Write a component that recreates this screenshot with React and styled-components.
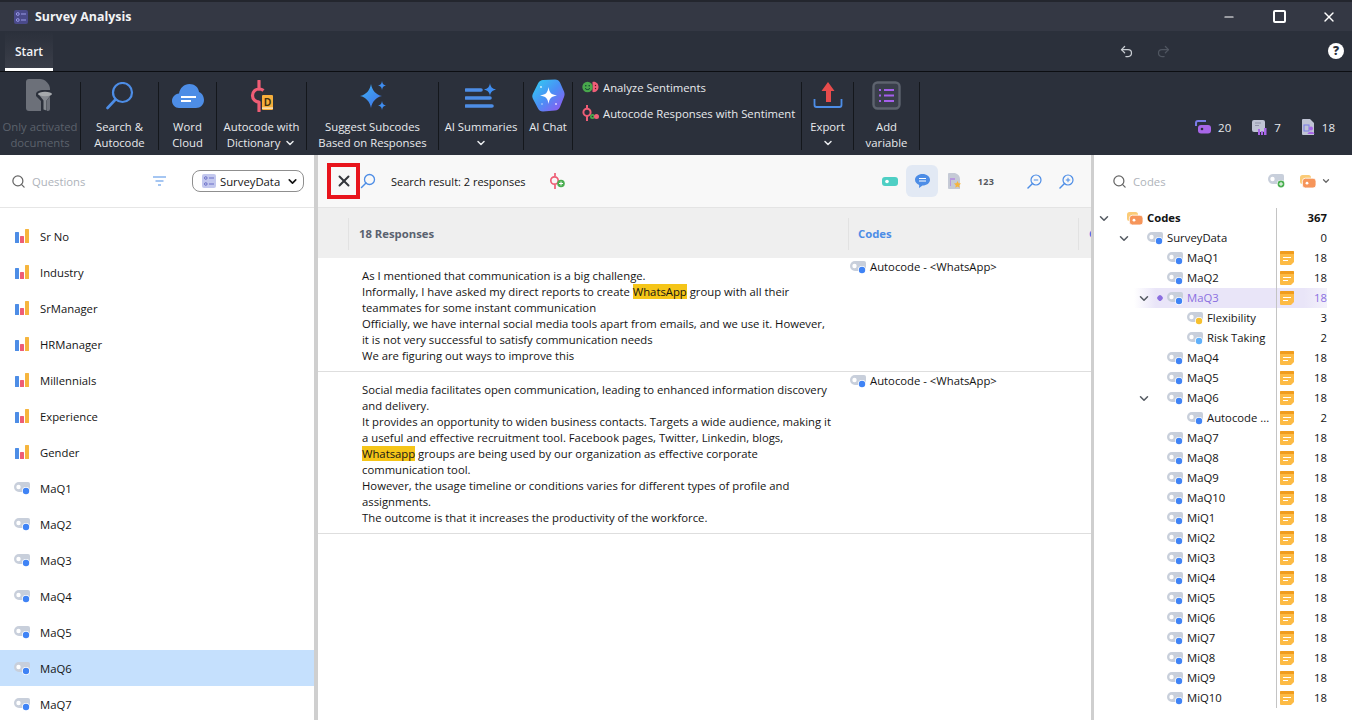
import { ChevronDown, Search, Undo2, X, Minus } from "lucide-react";
import styled, { createGlobalStyle } from "styled-components";

const GlobalStyle = createGlobalStyle`
    html, body {
        margin: 0;
        padding: 0;
        height: 100%;
        overflow: hidden;
        background: #fff;
    }
    body {
        font-family: "Open Sans", "Noto Sans", "Liberation Sans", sans-serif;
        font-size: 11.3px;
        color: #141414;
    }
`;

const Page = styled.div`
    width: 1352px;
    height: 720px;
    display: flex;
    flex-direction: column;
    overflow: hidden;
`;

const TitleBar = styled.div`
    height: 31px;
    flex: none;
    display: flex;
    align-items: center;
    padding-left: 14px;
    background: #343844;
    border-top: 2px solid #23262e;
    box-sizing: border-box;
    color: #fff;
`;

const AppName = styled.div`
    margin-left: 7px;
    font-size: 12.400px;
    font-weight: 700;
    color: #f2f3f5;
`;

const WindowButtons = styled.div`
    margin-left: auto;
    display: flex;
    align-items: center;
    margin-right: -2px;
`;

const WindowButton = styled.div`
    width: 50px;
    display: flex;
    justify-content: center;
    align-items: center;
`;

const MaxBox = styled.div`
    width: 9px;
    height: 9px;
    border: 2px solid #fff;
    border-radius: 2px;
`;

const TabBar = styled.div`
    height: 41px;
    flex: none;
    display: flex;
    align-items: stretch;
    padding-left: 5px;
    background: #2b303b;
    border-bottom: 1px solid #0c0e12;
    box-sizing: border-box;
`;

const Tab = styled.div`
    width: 48px;
    display: flex;
    align-items: center;
    justify-content: center;
    font-size: 12px;
    font-weight: 600;
    color: #f2f3f5;
    background: linear-gradient(#2b303b, #3a3e49);
    border-bottom: 3px solid #fff;
    border-radius: 3px 3px 0 0;
    padding-top: 3px;
    box-sizing: border-box;
`;

const TabTools = styled.div`
    margin-left: auto;
    display: flex;
    align-items: center;
    padding-right: 8px;
`;

const HistoryIcon = styled.div`
    width: 38px;
    display: flex;
    justify-content: center;
    color: ${(p) => (p.$off ? "#4f5560" : "#c8ccd2")};
    transform: ${(p) => (p.$off ? "scaleX(-1)" : "none")};
`;

const HelpBadge = styled.div`
    width: 16px;
    height: 16px;
    margin-left: 145px;
    border-radius: 50%;
    background: #fff;
    color: #2b303b;
    font-size: 12px;
    font-weight: 800;
    line-height: 16px;
    text-align: center;
`;

const Ribbon = styled.div`
    height: 83px;
    flex: none;
    display: flex;
    background: #2b303b;
`;

const RibbonButton = styled.div`
    width: ${(p) => p.$w}px;
    flex: none;
    display: flex;
    flex-direction: column;
    align-items: center;
    color: ${(p) => (p.$off ? "#5c626c" : "#e8eaed")};
    line-height: 16px;
    text-align: center;
    white-space: nowrap;
`;

const RibbonIcon = styled.div`
    height: 47px;
    flex: none;
    display: flex;
    align-items: center;
    justify-content: center;
`;

const RibbonLabel = styled.div`
    display: flex;
    align-items: center;
    justify-content: center;
    gap: 4px;
    height: 16px;
`;

const Separator = styled.div`
    width: 1px;
    flex: none;
    margin: 10px 0 5px;
    background: #14171c;
`;

const SentimentColumn = styled.div`
    width: 228px;
    flex: none;
    display: flex;
    flex-direction: column;
    gap: 10px;
    padding: 7px 0 0 9px;
    box-sizing: border-box;
    color: #e8eaed;
`;

const SentimentRow = styled.div`
    display: flex;
    align-items: center;
    gap: 4px;
    height: 16px;
    white-space: nowrap;
`;

const Stats = styled.div`
    margin-left: auto;
    display: flex;
    align-items: flex-start;
    gap: 21px;
    padding: 47px 17px 0 0;
    color: #e8eaed;
    font-size: 11.500px;
`;

const Stat = styled.div`
    display: flex;
    align-items: center;
    gap: 7px;
    height: 16px;
`;

const Body = styled.div`
    flex: 1;
    display: flex;
    min-height: 0;
`;

const LeftPanel = styled.div`
    width: 318px;
    flex: none;
    box-sizing: border-box;
    border-right: 4px solid #cfcfcf;
    display: flex;
    flex-direction: column;
`;

const SearchHeader = styled.div`
    height: 53px;
    flex: none;
    display: flex;
    align-items: center;
    box-sizing: border-box;
    padding-left: ${(p) => p.$pad}px;
    border-bottom: 1px solid ${(p) => (p.$plain ? "transparent" : "#e6e6e6")};
`;

const SearchHint = styled.span`
    margin-left: ${(p) => p.$gap}px;
    color: #aeb3ba;
`;

const SelectBox = styled.div`
    width: 112px;
    height: 22px;
    margin-left: 26px;
    margin-right: 10px;
    box-sizing: border-box;
    display: flex;
    align-items: center;
    gap: 4px;
    padding: 0 4px 0 9px;
    border: 1px solid #8f8f8f;
    border-radius: 8px;
    color: #141414;
    font-size: 11.300px;
`;

const SelectChevron = styled(ChevronDown)`
    margin-left: auto;
`;

const FilterIcon = styled.div`
    margin-left: auto;
    display: flex;
`;

const QuestionList = styled.div`
    padding-top: 10px;
`;

const QuestionRow = styled.div`
    height: 36px;
    display: flex;
    align-items: center;
    gap: 10px;
    padding-left: 14px;
    background: ${(p) => (p.$selected ? "#c5e0fd" : "transparent")};
`;

const QuestionIcon = styled.div`
    width: 16px;
    display: flex;
    justify-content: center;
`;

const MiddlePanel = styled.div`
    width: 773px;
    flex: none;
    display: flex;
    flex-direction: column;
    overflow: hidden;
`;

const MiddleToolbar = styled.div`
    height: 53px;
    flex: none;
    display: flex;
    align-items: center;
    box-sizing: border-box;
    padding-left: 9px;
    background: #f8f8f8;
    border-bottom: 1px solid #e4e4e4;
`;

const CloseMark = styled.div`
    width: 33px;
    height: 36px;
    box-sizing: border-box;
    border: 4px solid #e8141c;
    display: flex;
    align-items: center;
    justify-content: center;
    color: #33363b;
`;

const ResultText = styled.span`
    margin-left: 15px;
    margin-right: 23px;
    font-size: 11px;
`;

const ViewTools = styled.div`
    margin-left: auto;
    margin-right: 9px;
    display: flex;
    align-items: center;
`;

const ViewTool = styled.div`
    width: 32px;
    height: 32px;
    margin-left: ${(p) => p.$gap || 0}px;
    display: flex;
    align-items: center;
    justify-content: center;
    border-radius: 6px;
    background: ${(p) => (p.$active ? "#e2e9f4" : "transparent")};
    color: #55595f;
    font-size: 9px;
    font-weight: 700;
    letter-spacing: 0.4px;
`;

const HeaderRow = styled.div`
    height: 50px;
    flex: none;
    display: grid;
    grid-template-columns: 530px 230px 1fr;
    background: #efefef;
`;

const HeaderCell = styled.div`
    display: flex;
    align-items: center;
    font-weight: 700;
    color: ${(p) => p.$color};
    overflow: hidden;
    padding-left: ${(p) => p.$pad}px;
    position: relative;
    &::before {
        content: "";
        position: absolute;
        left: ${(p) => p.$line}px;
        top: 10px;
        bottom: 8px;
        width: 1px;
        background: #e2e2e2;
    }
`;

const ResponseRow = styled.div`
    display: grid;
    grid-template-columns: 530px 1fr;
    border-bottom: 1px solid #dedede;
    background: #fff;
`;

const ResponseText = styled.div`
    padding: 10px 0 7px 44px;
    line-height: 16px;
    white-space: nowrap;
`;

const TextLine = styled.div`
    height: 16px;
`;

const Mark = styled.span`
    background: #f5c518;
`;

const CodeCell = styled.div`
    display: flex;
    align-items: flex-start;
    gap: 4px;
    padding: 1px 0 0 2px;
    line-height: 16px;
`;

const CodeCellIcon = styled.div`
    padding-top: 2px;
    display: flex;
`;

const RightPanel = styled.div`
    flex: 1;
    min-width: 0;
    border-left: 3px solid #cfcfcf;
    display: flex;
    flex-direction: column;
`;

const CodeTools = styled.div`
    margin-left: auto;
    margin-right: 21px;
    display: flex;
    align-items: center;
    gap: 15px;
`;

const FolderTool = styled.div`
    display: flex;
    align-items: center;
    gap: 5px;
    color: #666;
`;

const TreeRow = styled.div`
    height: 20px;
    display: grid;
    grid-template-columns: 182px 51px;
    align-items: stretch;
    line-height: 20px;
    font-weight: ${(p) => (p.$bold ? 700 : 400)};
    color: ${(p) => (p.$selected ? "#8b6fe0" : "#141414")};
    background: ${(p) => (p.$selected ? "linear-gradient(90deg, #fff 40px, #e9e5f8 62px, #e9e5f8 90%, #f3f1fb 100%)" : "none")};
    margin-right: 25px;
`;

const TreeName = styled.div`
    display: flex;
    align-items: center;
    padding-left: ${(p) => 3 + p.$level * 20}px;
    white-space: nowrap;
    overflow: hidden;
`;

const Twisty = styled.div`
    width: 14px;
    flex: none;
    display: flex;
    justify-content: center;
    color: #555b63;
`;

const TreeDot = styled.div`
    width: 6px;
    height: 6px;
    flex: none;
    margin-left: 6px;
    margin-right: -12px;
    border-radius: 2px;
    transform: rotate(45deg) scale(0.85);
    background: ${(p) => (p.$show ? "#8b6fe0" : "transparent")};
`;

const TreeIconBox = styled.div`
    width: 16px;
    flex: none;
    margin-left: 16px;
    margin-right: 4px;
    display: flex;
    align-items: center;
`;

const TreeCount = styled.div`
    display: flex;
    align-items: center;
    justify-content: space-between;
    border-left: 1px solid #c4c4c4;
    padding-left: 3px;
`;

const MemoSlot = styled.div`
    width: 15px;
    display: flex;
`;

/* icons */
const Logo = () => (
    <svg width="14" height="14" viewBox="0 0 14 14">
        <rect width="14" height="14" rx="2" fill="#4a4a8a" />
        <circle cx="3.800" cy="4" r="1.400" fill="none" stroke="#9a9ae8" />
        <circle cx="3.800" cy="10" r="1.400" fill="none" stroke="#9a9ae8" />
        <path d="M7 4h5M7 10h5" stroke="#9a9ae8" />
    </svg>
);

const DocFilter = () => (
    <svg width="28" height="33" viewBox="0 0 28 33">
        <path d="M3 0h11c5 0 10 5 10 10v20a2 2 0 0 1-2 2H3a3 3 0 0 1-3-3V3a3 3 0 0 1 3-3z" fill="#6c7079" />
        <path d="M10 15c0-2 3-4 8-4h9v3l-6 7v11h-6V22l-5-5z" fill="#2b303b" />
        <path d="M12.500 15h13l-5 6.500v10l-3-1v-9z" fill="#858990" />
        <ellipse cx="19" cy="15" rx="7" ry="2.200" fill="#a6a9ad" />
    </svg>
);

const BigSearch = () => (
    <svg width="28" height="28" viewBox="0 0 28 28" fill="none">
        <circle cx="16.500" cy="10.500" r="9.500" stroke="#4d8de6" strokeWidth="2.200" />
        <path d="M9.500 17.500 1.500 26" stroke="#4d8de6" strokeWidth="2.600" strokeLinecap="round" />
    </svg>
);

const Cloud = () => (
    <svg width="32" height="24" viewBox="0 0 32 24">
        <path d="M7 24C3 24 0 20.500 0 17c0-4 3-7 7-7.500C8 4 12 0 17.500 0c5 0 9 3 9.500 8 3 1 5 4.500 5 8 0 4.500-3.500 8-8 8z" fill="#4d8de6" />
        <path d="M9 13h15M9 17h10" stroke="#fff" strokeWidth="1.800" />
    </svg>
);

const AutocodeDict = () => (
    <svg width="23" height="32" viewBox="0 0 23 32">
        <g fill="none" stroke="#ee5d75" strokeWidth="3.200">
            <path d="M9 1v8" strokeLinecap="round" />
            <path d="M13.500 10.500A6.500 6.500 0 0 0 9 9a6.500 6.500 0 0 0 0 13" />
            <path d="M9 22v9" strokeLinecap="round" />
        </g>
        <rect x="12" y="15" width="11" height="15" rx="1" fill="#f6ae3b" />
        <rect x="12" y="27.500" width="11" height="1.200" fill="#fff" opacity="0.8" />
        <text x="17.500" y="25.500" fontSize="10" fontWeight="700" textAnchor="middle" fill="#40300f" fontFamily="Liberation Sans, sans-serif">D</text>
    </svg>
);

const Sparkles = () => (
    <svg width="30" height="30" viewBox="0 0 30 30">
        <defs>
            <linearGradient id="spark" x1="0" y1="0" x2="1" y2="1">
                <stop offset="0" stopColor="#3fb4f5" />
                <stop offset="1" stopColor="#3f6de8" />
            </linearGradient>
        </defs>
        <path d="M13 3c1 6 5 11 11 12-6 1-10 6-11 12-1-6-5-11-11-12 6-1 10-6 11-12z" fill="url(#spark)" />
        <path d="M24 0c.5 3 1.500 4 4 4.500-2.500.5-3.500 1.500-4 4.500-.5-3-1.500-4-4-4.500 2.500-.5 3.500-1.500 4-4.500z" fill="#3f8df0" />
        <path d="M24 20c.5 3 1.500 4 4 4.500-2.500.5-3.500 1.500-4 4.500-.5-3-1.500-4-4-4.500 2.500-.5 3.500-1.500 4-4.500z" fill="#3f8df0" />
    </svg>
);

const Summaries = () => (
    <svg width="32" height="26" viewBox="0 0 32 26">
        <path d="M1 7h15M1 15h24M1 23h26" stroke="#4d8de6" strokeWidth="3.600" strokeLinecap="round" />
        <path d="M25 0c.6 4 2 5.500 6 6.500-4 1-5.400 2.500-6 6.500-.6-4-2-5.500-6-6.500 4-1 5.400-2.500 6-6.500z" fill="#3f8df0" />
    </svg>
);

const ChatHex = () => (
    <svg width="33" height="33" viewBox="0 0 33 33">
        <defs>
            <linearGradient id="hex" x1="0" y1="0" x2="1" y2="1">
                <stop offset="0" stopColor="#2fd2f2" />
                <stop offset="0.5" stopColor="#4a90f5" />
                <stop offset="1" stopColor="#9a50f0" />
            </linearGradient>
        </defs>
        <path d="M11 1 23 .5c2.500 0 4 1 5 3l4 9c.8 2 .8 3.500 0 5.500l-4 10c-1 2-2.500 3.500-5 3.500l-12 1c-2.500 0-4-1-5-3L1 20c-1-2-1-3.500 0-5.500L6 4.500c1-2 3-3.500 5-3.500z" fill="url(#hex)" />
        <path d="M16.500 8c1 6 2.500 7.500 8.500 8.500-6 1-7.500 2.500-8.500 8.500-1-6-2.500-7.500-8.500-8.500 6-1 7.500-2.500 8.500-8.500z" fill="#fff" />
        <circle cx="9" cy="8" r=".9" fill="#d8f4ff" />
        <circle cx="24" cy="25" r=".9" fill="#e8dcff" />
        <circle cx="10" cy="25" r=".7" fill="#e8f0ff" />
    </svg>
);

const Sentiments = () => (
    <svg width="17" height="12" viewBox="0 0 17 12">
        <path d="M10.500 1c3.500-.8 6 2 6 5s-2.500 5.800-6 5z" fill="#ef5f78" />
        <circle cx="5.500" cy="6" r="5.200" fill="#49a84c" />
        <circle cx="3.800" cy="4.800" r=".8" fill="#143" />
        <circle cx="7.200" cy="4.800" r=".8" fill="#143" />
        <path d="M3 7.200c1 1.800 4 1.800 5 0" stroke="#143" fill="none" />
        <circle cx="13.500" cy="4.500" r=".7" fill="#612" />
        <circle cx="13.500" cy="7.500" r=".7" fill="#612" />
    </svg>
);

const CodeSentiment = () => (
    <svg width="17" height="16" viewBox="0 0 17 16">
        <g fill="none" stroke="#ee5d75" strokeWidth="2">
            <path d="M5 0v3.500M5 11v5" />
            <circle cx="5" cy="7.300" r="3.600" />
        </g>
        <circle cx="10.500" cy="11.500" r="2.500" fill="#49a84c" />
        <circle cx="14.500" cy="11.500" r="2.500" fill="#ef5f78" />
        <circle cx="10.500" cy="11.500" r=".8" fill="#2b303b" />
    </svg>
);

const ExportIcon = () => (
    <svg width="30" height="30" viewBox="0 0 30 30">
        <path d="M15 1 8.500 10H13v11h5V10h3.500z" fill="#e84c4c" />
        <path d="M1.500 18v6a2 2 0 0 0 2 2h23a2 2 0 0 0 2-2v-6" fill="none" stroke="#4d8de6" strokeWidth="1.800" />
    </svg>
);

const AddVariable = () => (
    <svg width="29" height="29" viewBox="0 0 29 29">
        <rect x="1.500" y="1.500" width="26" height="26" rx="4" fill="#3a3f4b" stroke="#5d636e" strokeWidth="2.400" />
        <path d="M7 9h2M7 14.500h2M7 20h2M12 9h10M12 14.500h10M12 20h10" stroke="#a45fec" strokeWidth="2" />
    </svg>
);

const StatCodes = () => (
    <svg width="16" height="14" viewBox="0 0 16 14">
        <path d="M1 6V3a2 2 0 0 1 2-2h8" stroke="#7a7ce8" strokeWidth="2" fill="none" />
        <rect x="3" y="5" width="13" height="8.500" rx="3" fill="#a866e8" />
        <circle cx="7" cy="9" r="1.300" fill="#2b303b" />
    </svg>
);

const StatChart = () => (
    <svg width="15" height="15" viewBox="0 0 15 15">
        <rect x="0" y="0" width="13" height="12" rx="2" fill="#bfc3d4" />
        <path d="M3 3h6M3 5.500h4" stroke="#8f93a8" />
        <path d="M6 9h2v6H6zM9 11h2v4H9zM12 8h2.500v7H12z" fill="#a866e8" />
    </svg>
);

const StatDoc = () => (
    <svg width="13" height="16" viewBox="0 0 13 16">
        <path d="M1 0h7l4 4v12H1a1 1 0 0 1-1-1V1a1 1 0 0 1 1-1z" fill="#bfc3d4" />
        <rect x="2" y="6" width="5" height="6" fill="none" stroke="#7a7ce8" />
        <circle cx="9" cy="9.500" r="2" fill="#a866e8" />
        <path d="M5.500 15c.5-3 6.500-3 7 0z" fill="#a866e8" />
    </svg>
);

const SmallSearch = () => (
    <svg width="16" height="16" viewBox="0 0 16 16" fill="none">
        <circle cx="9.500" cy="6.500" r="5" stroke="#4d8de6" strokeWidth="1.300" />
        <path d="M6 10 1.500 14.500" stroke="#4d8de6" strokeWidth="1.500" strokeLinecap="round" />
    </svg>
);

const FilterLines = () => (
    <svg width="13" height="10" viewBox="0 0 13 10">
        <path d="M0 1h13M2.500 5h8M5 9h3" stroke="#4d8de6" strokeWidth="1.200" />
    </svg>
);

const Bars = () => (
    <svg width="14" height="14" viewBox="0 0 14 14">
        <rect x="0" y="3" width="4" height="11" rx=".5" fill="#4d8de6" />
        <rect x="5" y="7" width="4" height="7" rx=".5" fill="#ee5d75" />
        <rect x="10" y="0" width="4" height="14" rx=".5" fill="#f6b53d" />
    </svg>
);

const CodeIcon = ({ color = "#3f83f5" }) => (
    <svg width="16" height="13" viewBox="0 0 16 13">
        <path d="M5 0h9a2 2 0 0 1 2 2v6a2 2 0 0 1-2 2H5A5 5 0 0 1 5 0z" fill="#c8cfdb" />
        <circle cx="4.500" cy="5" r="2.200" fill="#fff" />
        <circle cx="12" cy="9" r="4" fill="#fff" />
        <circle cx="12" cy="9" r="3.200" fill={color} />
    </svg>
);

const FolderCode = () => (
    <svg width="16" height="13" viewBox="0 0 16 13">
        <rect x="0" y="0" width="11" height="9" rx="2.500" fill="#fbcb77" />
        <rect x="2.400" y="3.200" width="13.600" height="9.800" rx="3" fill="#f6955a" stroke="#fff" strokeWidth=".8" />
        <circle cx="7" cy="8.200" r="1.400" fill="#fff" />
    </svg>
);

const AddCode = () => (
    <svg width="17" height="14" viewBox="0 0 17 14">
        <path d="M5 0h9a2 2 0 0 1 2 2v6a2 2 0 0 1-2 2H5A5 5 0 0 1 5 0z" fill="#c8cfdb" />
        <circle cx="4.500" cy="5" r="2.200" fill="#fff" />
        <circle cx="13" cy="10" r="4" fill="#fff" />
        <circle cx="13" cy="10" r="3.400" fill="#4aae50" />
        <path d="M11 10h4M13 8v4" stroke="#fff" />
    </svg>
);

const AddCodeColor = () => (
    <svg width="16" height="16" viewBox="0 0 16 16">
        <g fill="none" stroke="#ee5d75" strokeWidth="1.700">
            <path d="M6 0v3M6 12v4" />
            <circle cx="5.500" cy="7.500" r="3.700" />
        </g>
        <circle cx="12" cy="10.500" r="3.800" fill="#4aae50" />
        <path d="M10 10.500h4M12 8.500v4" stroke="#fff" />
    </svg>
);

const Memo = () => (
    <svg width="14" height="14" viewBox="0 0 14 14">
        <path d="M1 0h12a1 1 0 0 1 1 1v10l-3 3H1a1 1 0 0 1-1-1V1a1 1 0 0 1 1-1z" fill="#fdbb45" />
        <path d="M1 0h12a1 1 0 0 1 1 1v2H0V1a1 1 0 0 1 1-1z" fill="#f09c1e" />
        <path d="M3 6.500h8M3 9.500h5" stroke="#fff" />
    </svg>
);

const Toggle = () => (
    <svg width="16" height="9" viewBox="0 0 16 9">
        <rect width="16" height="9" rx="3" fill="#4ecfc4" />
        <circle cx="5" cy="4.500" r="1.800" fill="#fff" />
    </svg>
);

const Comment = () => (
    <svg width="15" height="14" viewBox="0 0 15 14">
        <path d="M7.500 0C11.700 0 15 2.500 15 5.800s-3.300 5.800-7.500 5.800L4 14l.2-3C1.700 10 0 8.100 0 5.800 0 2.500 3.300 0 7.500 0z" fill="#4d8de6" />
        <path d="M4 4.500h7M4 7h7" stroke="#fff" />
    </svg>
);

const DocStar = () => (
    <svg width="13" height="16" viewBox="0 0 13 16">
        <path d="M1 0h6c3 1 5 3 5 6v10H1a1 1 0 0 1-1-1V1a1 1 0 0 1 1-1z" fill="#c5cad6" />
        <path d="M2 6h5M2 8h1M2 10h1M2 12h1" stroke="#a866e8" />
        <path d="M9.500 8l1.100 2.300 2.400.3-1.800 1.700.5 2.500-2.200-1.200-2.200 1.200.5-2.500L6 10.600l2.400-.3z" fill="#f6b53d" />
    </svg>
);

const Zoomer = ({ plus }) => (
    <svg width="15" height="15" viewBox="0 0 15 15" fill="none" stroke="#4d8de6">
        <circle cx="9" cy="6" r="5" strokeWidth="1.200" />
        <path d="M5.500 9.500 1 14" strokeWidth="1.500" strokeLinecap="round" />
        <path d="M6.800 6h4.400" />
        {plus && <path d="M9 3.800v4.400" />}
    </svg>
);

const SelectIcon = () => (
    <svg width="14" height="14" viewBox="0 0 14 14">
        <rect width="14" height="14" rx="2" fill="#c3c8ee" />
        <circle cx="3.800" cy="4" r="1.300" fill="none" stroke="#6b6fc8" />
        <circle cx="3.800" cy="10" r="1.300" fill="none" stroke="#6b6fc8" />
        <path d="M7 4h5M7 10h5" stroke="#6b6fc8" />
    </svg>
);

const questions = [
    { name: "Sr No", bars: true },
    { name: "Industry", bars: true },
    { name: "SrManager", bars: true },
    { name: "HRManager", bars: true },
    { name: "Millennials", bars: true },
    { name: "Experience", bars: true },
    { name: "Gender", bars: true },
    { name: "MaQ1" },
    { name: "MaQ2" },
    { name: "MaQ3" },
    { name: "MaQ4" },
    { name: "MaQ5" },
    { name: "MaQ6", selected: true },
    { name: "MaQ7" },
];

const simpleCodes = (prefix, from, to) => {
    let rows = [];
    for (let i = from; i <= to; i++) {
        rows.push({ name: prefix + i, level: 2, count: 18, memo: true });
    }
    return rows;
};

const treeRows = [
    { name: "Codes", level: 0, count: 367, open: true, bold: true, root: true },
    { name: "SurveyData", level: 1, count: 0, open: true },
    ...simpleCodes("MaQ", 1, 2),
    { name: "MaQ3", level: 2, count: 18, memo: true, open: true, selected: true },
    { name: "Flexibility", level: 3, count: 3, color: "#f6c02e" },
    { name: "Risk Taking", level: 3, count: 2, color: "#5fb0fa" },
    ...simpleCodes("MaQ", 4, 5),
    { name: "MaQ6", level: 2, count: 18, memo: true, open: true },
    { name: "Autocode ...", level: 3, count: 2, memo: true },
    ...simpleCodes("MaQ", 7, 10),
    ...simpleCodes("MiQ", 1, 10),
];

const responses = [
    {
        lines: [
            "As I mentioned that communication is a big challenge.",
            <>Informally, I have asked my direct reports to create <Mark>WhatsApp</Mark> group with all their</>,
            "teammates for some instant communication",
            "Officially, we have internal social media tools apart from emails, and we use it. However,",
            "it is not very successful to satisfy communication needs",
            "We are figuring out ways to improve this",
        ],
    },
    {
        lines: [
            "Social media facilitates open communication, leading to enhanced information discovery",
            "and delivery.",
            "It provides an opportunity to widen business contacts. Targets a wide audience, making it",
            "a useful and effective recruitment tool. Facebook pages, Twitter, Linkedin, blogs,",
            <><Mark>Whatsapp</Mark> groups are being used by our organization as effective corporate</>,
            "communication tool.",
            "However, the usage timeline or conditions varies for different types of profile and",
            "assignments.",
            "The outcome is that it increases the productivity of the workforce.",
        ],
    },
];

export default function App() {
    return (
        <Page>
            <GlobalStyle />
            <TitleBar>
                <Logo />
                <AppName>Survey Analysis</AppName>
                <WindowButtons>
                    <WindowButton><Minus size={14} strokeWidth={2} /></WindowButton>
                    <WindowButton><MaxBox /></WindowButton>
                    <WindowButton><X size={16} strokeWidth={2} /></WindowButton>
                </WindowButtons>
            </TitleBar>
            <TabBar>
                <Tab>Start</Tab>
                <TabTools>
                    <HistoryIcon><Undo2 size={15} /></HistoryIcon>
                    <HistoryIcon $off><Undo2 size={15} /></HistoryIcon>
                    <HelpBadge>?</HelpBadge>
                </TabTools>
            </TabBar>
            <Ribbon>
                <RibbonButton $w={80} $off>
                    <RibbonIcon><DocFilter /></RibbonIcon>
                    <RibbonLabel>Only activated</RibbonLabel>
                    <RibbonLabel>documents</RibbonLabel>
                </RibbonButton>
                <Separator />
                <RibbonButton $w={77}>
                    <RibbonIcon><BigSearch /></RibbonIcon>
                    <RibbonLabel>Search &amp;</RibbonLabel>
                    <RibbonLabel>Autocode</RibbonLabel>
                </RibbonButton>
                <Separator />
                <RibbonButton $w={57}>
                    <RibbonIcon><Cloud /></RibbonIcon>
                    <RibbonLabel>Word</RibbonLabel>
                    <RibbonLabel>Cloud</RibbonLabel>
                </RibbonButton>
                <Separator />
                <RibbonButton $w={89}>
                    <RibbonIcon><AutocodeDict /></RibbonIcon>
                    <RibbonLabel>Autocode with</RibbonLabel>
                    <RibbonLabel>Dictionary <ChevronDown size={12} strokeWidth={3} /></RibbonLabel>
                </RibbonButton>
                <Separator />
                <RibbonButton $w={131}>
                    <RibbonIcon><Sparkles /></RibbonIcon>
                    <RibbonLabel>Suggest Subcodes</RibbonLabel>
                    <RibbonLabel>Based on Responses</RibbonLabel>
                </RibbonButton>
                <Separator />
                <RibbonButton $w={84}>
                    <RibbonIcon><Summaries /></RibbonIcon>
                    <RibbonLabel>AI Summaries</RibbonLabel>
                    <RibbonLabel><ChevronDown size={12} strokeWidth={3} /></RibbonLabel>
                </RibbonButton>
                <Separator />
                <RibbonButton $w={48}>
                    <RibbonIcon><ChatHex /></RibbonIcon>
                    <RibbonLabel>AI Chat</RibbonLabel>
                </RibbonButton>
                <Separator />
                <SentimentColumn>
                    <SentimentRow><Sentiments /> Analyze Sentiments</SentimentRow>
                    <SentimentRow><CodeSentiment /> Autocode Responses with Sentiment</SentimentRow>
                </SentimentColumn>
                <Separator />
                <RibbonButton $w={51}>
                    <RibbonIcon><ExportIcon /></RibbonIcon>
                    <RibbonLabel>Export</RibbonLabel>
                    <RibbonLabel><ChevronDown size={12} strokeWidth={3} /></RibbonLabel>
                </RibbonButton>
                <Separator />
                <RibbonButton $w={65}>
                    <RibbonIcon><AddVariable /></RibbonIcon>
                    <RibbonLabel>Add</RibbonLabel>
                    <RibbonLabel>variable</RibbonLabel>
                </RibbonButton>
                <Separator />
                <Stats>
                    <Stat><StatCodes /> 20</Stat>
                    <Stat><StatChart /> 7</Stat>
                    <Stat><StatDoc /> 18</Stat>
                </Stats>
            </Ribbon>
            <Body>
                <LeftPanel>
                    <SearchHeader $pad={11}>
                        <Search size={15} color="#666" />
                        <SearchHint $gap={6}>Questions</SearchHint>
                        <FilterIcon><FilterLines /></FilterIcon>
                        <SelectBox>
                            <SelectIcon />
                            SurveyData
                            <SelectChevron size={13} strokeWidth={3} />
                        </SelectBox>
                    </SearchHeader>
                    <QuestionList>
                        {questions.map((q) => (
                            <QuestionRow key={q.name} $selected={q.selected}>
                                <QuestionIcon>{q.bars ? <Bars /> : <CodeIcon />}</QuestionIcon>
                                <span>{q.name}</span>
                            </QuestionRow>
                        ))}
                    </QuestionList>
                </LeftPanel>
                <MiddlePanel>
                    <MiddleToolbar>
                        <CloseMark><X size={18} strokeWidth={2.6} /></CloseMark>
                        <SmallSearch />
                        <ResultText>Search result: 2 responses</ResultText>
                        <AddCodeColor />
                        <ViewTools>
                            <ViewTool><Toggle /></ViewTool>
                            <ViewTool $active><Comment /></ViewTool>
                            <ViewTool><DocStar /></ViewTool>
                            <ViewTool>123</ViewTool>
                            <ViewTool $gap={16}><Zoomer /></ViewTool>
                            <ViewTool><Zoomer plus /></ViewTool>
                        </ViewTools>
                    </MiddleToolbar>
                    <HeaderRow>
                        <HeaderCell $color="#5a6270" $pad={41} $line={30}>18 Responses</HeaderCell>
                        <HeaderCell $color="#4d8de6" $pad={10} $line={0}>Codes</HeaderCell>
                        <HeaderCell $color="#4d6fe6" $pad={11} $line={0}>Codes</HeaderCell>
                    </HeaderRow>
                    {responses.map((r, i) => (
                        <ResponseRow key={i}>
                            <ResponseText>
                                {r.lines.map((line, j) => <TextLine key={j}>{line}</TextLine>)}
                            </ResponseText>
                            <CodeCell><CodeCellIcon><CodeIcon /></CodeCellIcon> Autocode - &lt;WhatsApp&gt;</CodeCell>
                        </ResponseRow>
                    ))}
                </MiddlePanel>
                <RightPanel>
                    <SearchHeader $plain $pad={18}>
                        <Search size={15} color="#666" />
                        <SearchHint $gap={6}>Codes</SearchHint>
                        <CodeTools>
                            <AddCode />
                            <FolderTool>
                                <FolderCode />
                                <ChevronDown size={10} strokeWidth={3} />
                            </FolderTool>
                        </CodeTools>
                    </SearchHeader>
                    <div>
                        {treeRows.map((row, i) => (
                            <TreeRow key={i} $bold={row.bold} $selected={row.selected}>
                                <TreeName $level={row.level}>
                                    <Twisty>{row.open && <ChevronDown size={15} strokeWidth={2.6} />}</Twisty>
                                    <TreeDot $show={row.selected} />
                                    <TreeIconBox>
                                        {row.root ? <FolderCode /> : <CodeIcon color={row.color} />}
                                    </TreeIconBox>
                                    {row.name}
                                </TreeName>
                                <TreeCount>
                                    <MemoSlot>{row.memo && <Memo />}</MemoSlot>
                                    {row.count}
                                </TreeCount>
                            </TreeRow>
                        ))}
                    </div>
                </RightPanel>
            </Body>
        </Page>
    );
}
